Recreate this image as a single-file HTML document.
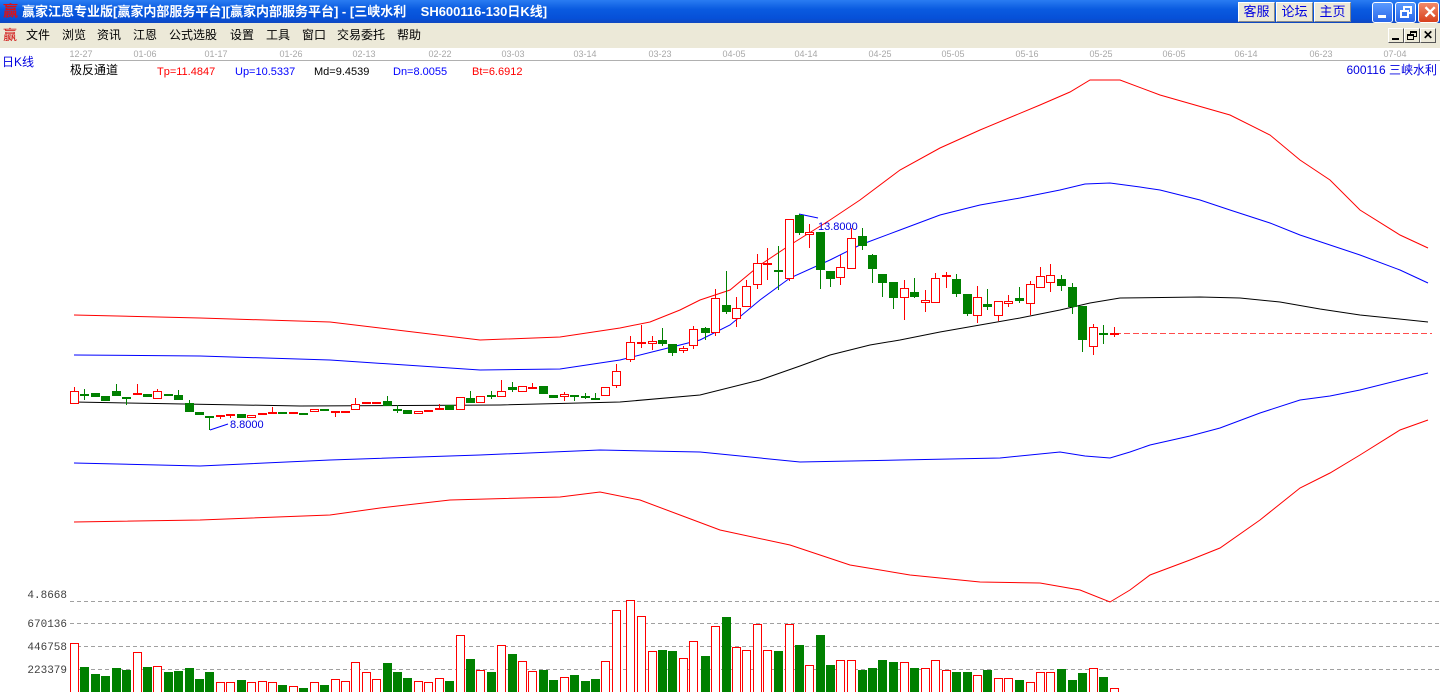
<!DOCTYPE html>
<html><head><meta charset="utf-8"><style>
*{margin:0;padding:0;box-sizing:border-box}
body{width:1440px;height:692px;overflow:hidden;background:#fff;font-family:"Liberation Sans","Noto Sans CJK SC",sans-serif;position:relative}
#title{position:absolute;left:0;top:0;width:1440px;height:23px;background:linear-gradient(#2a7cf2,#0a5be0 40%,#0650d8 80%,#1048c0);color:#fff;font-weight:bold;font-size:13px;line-height:23px}
#title .ic{position:absolute;left:3px;top:0;color:#e01010;font-size:15px}
#title .t{position:absolute;left:22px;top:0;white-space:pre}
.tb{position:absolute;top:2px;height:20px;width:37px;background:#ece9d8;border:1px solid #fff;border-right-color:#888;border-bottom-color:#888;color:#0000e0;font-size:13px;text-align:center;line-height:18px;font-weight:normal}
.wc{position:absolute;top:2px;width:21px;height:21px;border-radius:3px;border:1px solid #fff;background:linear-gradient(#5a9bff,#2a66e8)}
#menu{position:absolute;left:0;top:23px;width:1440px;height:25px;background:#ece9d8;font-size:12px;line-height:25px}
#menu span{position:absolute;top:0}
.mb{position:absolute;top:28px;width:16px;height:15px;background:#ece9d8;border:1px solid #fff;border-right-color:#555;border-bottom-color:#555}
svg{position:absolute;left:0;top:0}
</style></head><body>
<div id="title"><span class="ic">赢</span><span class="t">赢家江恩专业版[赢家内部服务平台][赢家内部服务平台] - [三峡水利    SH600116-130日K线]</span>
<div class="tb" style="left:1238px">客服</div><div class="tb" style="left:1276px">论坛</div><div class="tb" style="left:1314px">主页</div>
<div class="wc" style="left:1372px"><div style="position:absolute;left:5px;top:12px;width:8px;height:3px;background:#fff"></div></div>
<div class="wc" style="left:1395px"><div style="position:absolute;left:7px;top:3px;width:9px;height:8px;border:2px solid #fff"></div><div style="position:absolute;left:4px;top:7px;width:9px;height:8px;border:2px solid #fff;background:#3a78f0"></div></div>
<div class="wc" style="left:1418px;background:linear-gradient(#f08a6a,#d8401c)"><span style="position:absolute;left:4px;top:-2px;font-size:17px;color:#fff">✕</span></div>
</div>
<div id="menu"><span style="left:3px;color:#d01010;font-size:14px">赢</span><span style="left:26px">文件</span><span style="left:62px">浏览</span><span style="left:97px">资讯</span><span style="left:133px">江恩</span><span style="left:169px">公式选股</span><span style="left:230px">设置</span><span style="left:266px">工具</span><span style="left:302px">窗口</span><span style="left:337px">交易委托</span><span style="left:397px">帮助</span>
</div>
<div class="mb" style="left:1388px"><div style="position:absolute;left:3px;top:9px;width:7px;height:2px;background:#000"></div></div>
<div class="mb" style="left:1404px"><div style="position:absolute;left:5px;top:2px;width:7px;height:6px;border:1px solid #000;border-top-width:2px"></div><div style="position:absolute;left:2px;top:5px;width:7px;height:6px;border:1px solid #000;border-top-width:2px;background:#ece9d8"></div></div>
<div class="mb" style="left:1420px;font-size:12px;font-weight:bold;text-align:center;line-height:13px">✕</div>
<svg id="s" width="1440" height="692" style="top:0"></svg>
<svg width="1440" height="692" style="font-family:'Liberation Sans','Noto Sans CJK SC',sans-serif">
<g fill="#a8a8a8" font-size="9" text-anchor="middle">
<text x="81" y="57">12-27</text><text x="145" y="57">01-06</text><text x="216" y="57">01-17</text><text x="291" y="57">01-26</text><text x="364" y="57">02-13</text><text x="440" y="57">02-22</text><text x="513" y="57">03-03</text><text x="585" y="57">03-14</text><text x="660" y="57">03-23</text><text x="734" y="57">04-05</text><text x="806" y="57">04-14</text><text x="880" y="57">04-25</text><text x="953" y="57">05-05</text><text x="1027" y="57">05-16</text><text x="1101" y="57">05-25</text><text x="1174" y="57">06-05</text><text x="1246" y="57">06-14</text><text x="1321" y="57">06-23</text><text x="1395" y="57">07-04</text>
</g>
<line x1="70" y1="60.5" x2="1440" y2="60.5" stroke="#b0b0b0"/>
<text x="2" y="66" font-size="12" fill="#0000e0">日K线</text>
<text x="70" y="74" font-size="12" fill="#000">极反通道</text>
<g font-size="11"><text x="157" y="75" fill="#f00">Tp=11.4847</text><text x="235" y="75" fill="#00f">Up=10.5337</text><text x="314" y="75" fill="#000">Md=9.4539</text><text x="393" y="75" fill="#00f">Dn=8.0055</text><text x="472" y="75" fill="#f00">Bt=6.6912</text></g>
<text x="1437" y="74" font-size="12" fill="#0000e0" text-anchor="end">600116 三峡水利</text>
<g font-family="'Liberation Mono',monospace" font-size="11" fill="#404040" text-anchor="end"><text x="67" y="598">4.8668</text><text x="67" y="627">670136</text><text x="67" y="650">446758</text><text x="67" y="673">223379</text></g>
<text x="230" y="428" font-size="11" fill="#0000e0">8.8000</text>
<text x="818" y="230" font-size="11" fill="#0000e0">13.8000</text>
</svg>
<script>
var s=document.getElementById('s'),h='';
function pl(p,c){h+='<polyline fill="none" stroke="'+c+'" stroke-width="1" points="'+p+'"/>';}
[601,623,646,669].forEach(function(y){h+='<line x1="70" y1="'+(y+.5)+'" x2="1440" y2="'+(y+.5)+'" stroke="#a0a0a0" stroke-dasharray="4,3"/>';});
pl("74,315 200,318 330,322 480,340 560,337 620,328 650,322 680,310 700,300 730,290 760,265 790,245 830,220 860,200 900,170 940,148 980,130 1040,105 1070,92 1090,80 1120,80 1160,95 1230,115 1270,135 1300,160 1330,180 1360,210 1400,235 1428,248","#f00");
pl("74,355 200,356 330,360 480,370 560,369 620,360 660,350 700,340 730,325 760,300 790,278 830,260 860,245 900,230 940,215 980,205 1020,198 1060,190 1085,184 1110,183 1140,187 1160,190 1200,200 1230,210 1270,223 1300,235 1360,255 1400,270 1428,283","#00f");
pl("74,402 300,406 500,405 620,402 700,395 760,380 800,366 830,355 870,345 900,340 940,332 980,325 1020,318 1060,310 1090,303 1120,298 1200,297 1240,298 1280,302 1320,309 1360,315 1428,322","#000");
pl("74,463 200,466 330,460 480,455 600,450 700,452 800,462 900,460 1000,458 1060,452 1085,456 1110,458 1130,452 1150,445 1190,436 1220,428 1260,413 1300,400 1330,396 1360,390 1400,380 1428,373","#00f");
pl("74,522 200,520 330,515 380,508 450,500 560,497 600,492 640,500 680,515 720,530 790,545 820,555 850,565 910,575 980,582 1040,583 1080,590 1110,602 1130,590 1150,575 1190,560 1220,548 1260,520 1300,488 1330,473 1360,455 1400,430 1428,420","#f00");
h+='<line x1="1115" y1="333.5" x2="1432" y2="333.5" stroke="#f00" stroke-dasharray="6,3" stroke-opacity=".7"/>';
pl("210,430 228,424","#00f");pl("799,214 818,218","#00f");
var L=[['r',391,404,387,404],['g',394,395,389,400],['g',393,397],['g',396,401],['g',391,396,384,396],['g',397,398,397,405],['r',393,395,384,395],['g',394,397],['r',391,399,389,399],['g',394,396],
['g',395,400,390,400],['g',403,412,400,412],['g',412,415],['g',416,417,416,430],['r',415,416,415,419],['r',414,415,414,418],['g',414,418],['r',415,418],['r',413,415],['r',412,413,407,413],
['g',412,413],['r',412,413],['g',413,414],['r',409,412],['g',409,411],['r',411,412,411,417],['r',411,412],['r',404,410,398,410],['r',402,403],['r',402,403],
['g',401,406,396,406],['g',409,410,405,413],['g',410,414],['r',411,414],['r',410,411],['r',408,409,404,410],['g',405,410],['r',397,410],['g',398,403,391,403],['r',396,403],
['g',395,396,391,399],['r',391,397,380,397],['g',387,390,382,392],['r',386,392],['r',387,388,383,388],['g',386,394],['g',395,398],['r',394,397,392,401],['g',395,396,395,401],['g',396,397,393,399],
['g',398,399,393,399],['r',387,396],['r',371,386,364,388]];
var R=[[630,'r',342,360,336,362],[641,'r',342,344,325,348],[652,'r',341,344,336,350],[662,'g',340,344,328,346],[672,'g',344,353,344,356],[683,'r',348,351,346,353],[693,'r',329,346,326,349],[705,'g',328,333,327,340],[715,'r',298,333,289,336],[726,'g',305,312,271,314],[736,'r',308,319,297,327],[746,'r',286,307,280,307],[757,'r',263,285,254,289],[767,'r',263,265,248,280],[778,'g',270,272,246,290],[789,'r',219,279,219,281],[799,'g',215,233,214,235],[809,'r',232,235,224,248],[820,'g',232,270,232,289],[830,'g',271,279,271,287],[840,'r',267,278,255,285],[851,'r',238,269,228,269],[862,'g',236,246,228,250],[872,'g',255,269,254,283],[882,'g',274,283,274,297],[893,'g',282,298,282,309],
[904,'r',288,298,280,320],[914,'g',292,297,278,298],[925,'r',300,303,290,312],[935,'r',278,303,273,303],[946,'r',275,277,272,288],[956,'g',279,294,274,297],[967,'g',294,314,294,316],[977,'r',297,316,286,323],[987,'g',304,307,289,310],[998,'r',301,316,301,321],[1008,'r',301,304,295,307],[1019,'g',298,301,287,303],[1030,'r',284,304,281,315],[1040,'r',276,288,267,288],[1050,'r',275,283,264,292],[1061,'g',279,286,275,291],[1072,'g',287,307,283,314],[1082,'g',306,340,306,352],[1093,'r',327,347,324,355],[1103,'g',333,334,325,344],[1114,'r',333,334,327,337]];
var C=[];
L.forEach(function(d,i){var x=Math.round(74+i*10.42);C.push([x,d[0],d[1],d[2],d[3]||d[1],d[4]||d[2]]);});
R.forEach(function(d){C.push(d);});
var V=[643,667,674,676,668,670,652,667,666,672,671,668,679,672,682,682,680,682,681,682,685,686,688,682,685,679,681,662,672,679,663,672,678,681,682,678,681,635,659,670,672,645,654,661,671,670,680,677,675,681,679,661,610,
600,616,651,650,651,658,641,656,626,617,647,650,624,650,651,624,645,665,635,665,660,660,670,668,660,662,
662,668,668,660,670,672,672,675,670,678,678,680,682,672,672,669,680,673,668,677,688];
C.forEach(function(c,i){var x=c[0],col=c[1]=='r'?'#f00':'#008000';
h+='<line x1="'+(x+.5)+'" y1="'+c[4]+'" x2="'+(x+.5)+'" y2="'+c[5]+'" stroke="'+col+'"/>';
var t=c[2],b=c[3];if(b-t<2){h+='<rect x="'+(x-4)+'" y="'+t+'" width="9" height="2" fill="'+col+'"/>';}
else if(c[1]=='r')h+='<rect x="'+(x-3.5)+'" y="'+(t+.5)+'" width="8" height="'+(b-t-1)+'" fill="#fff" stroke="'+col+'"/>';
else h+='<rect x="'+(x-4)+'" y="'+t+'" width="9" height="'+(b-t)+'" fill="'+col+'"/>';
var v=V[i];if(v!==undefined){if(c[1]=='r')h+='<rect x="'+(x-3.5)+'" y="'+(v+.5)+'" width="8" height="'+(692-v)+'" fill="#fff" stroke="#f00"/>';else h+='<rect x="'+(x-4)+'" y="'+v+'" width="9" height="'+(692-v)+'" fill="#008000"/>';}
});
s.innerHTML=h;
</script>
</body></html>
